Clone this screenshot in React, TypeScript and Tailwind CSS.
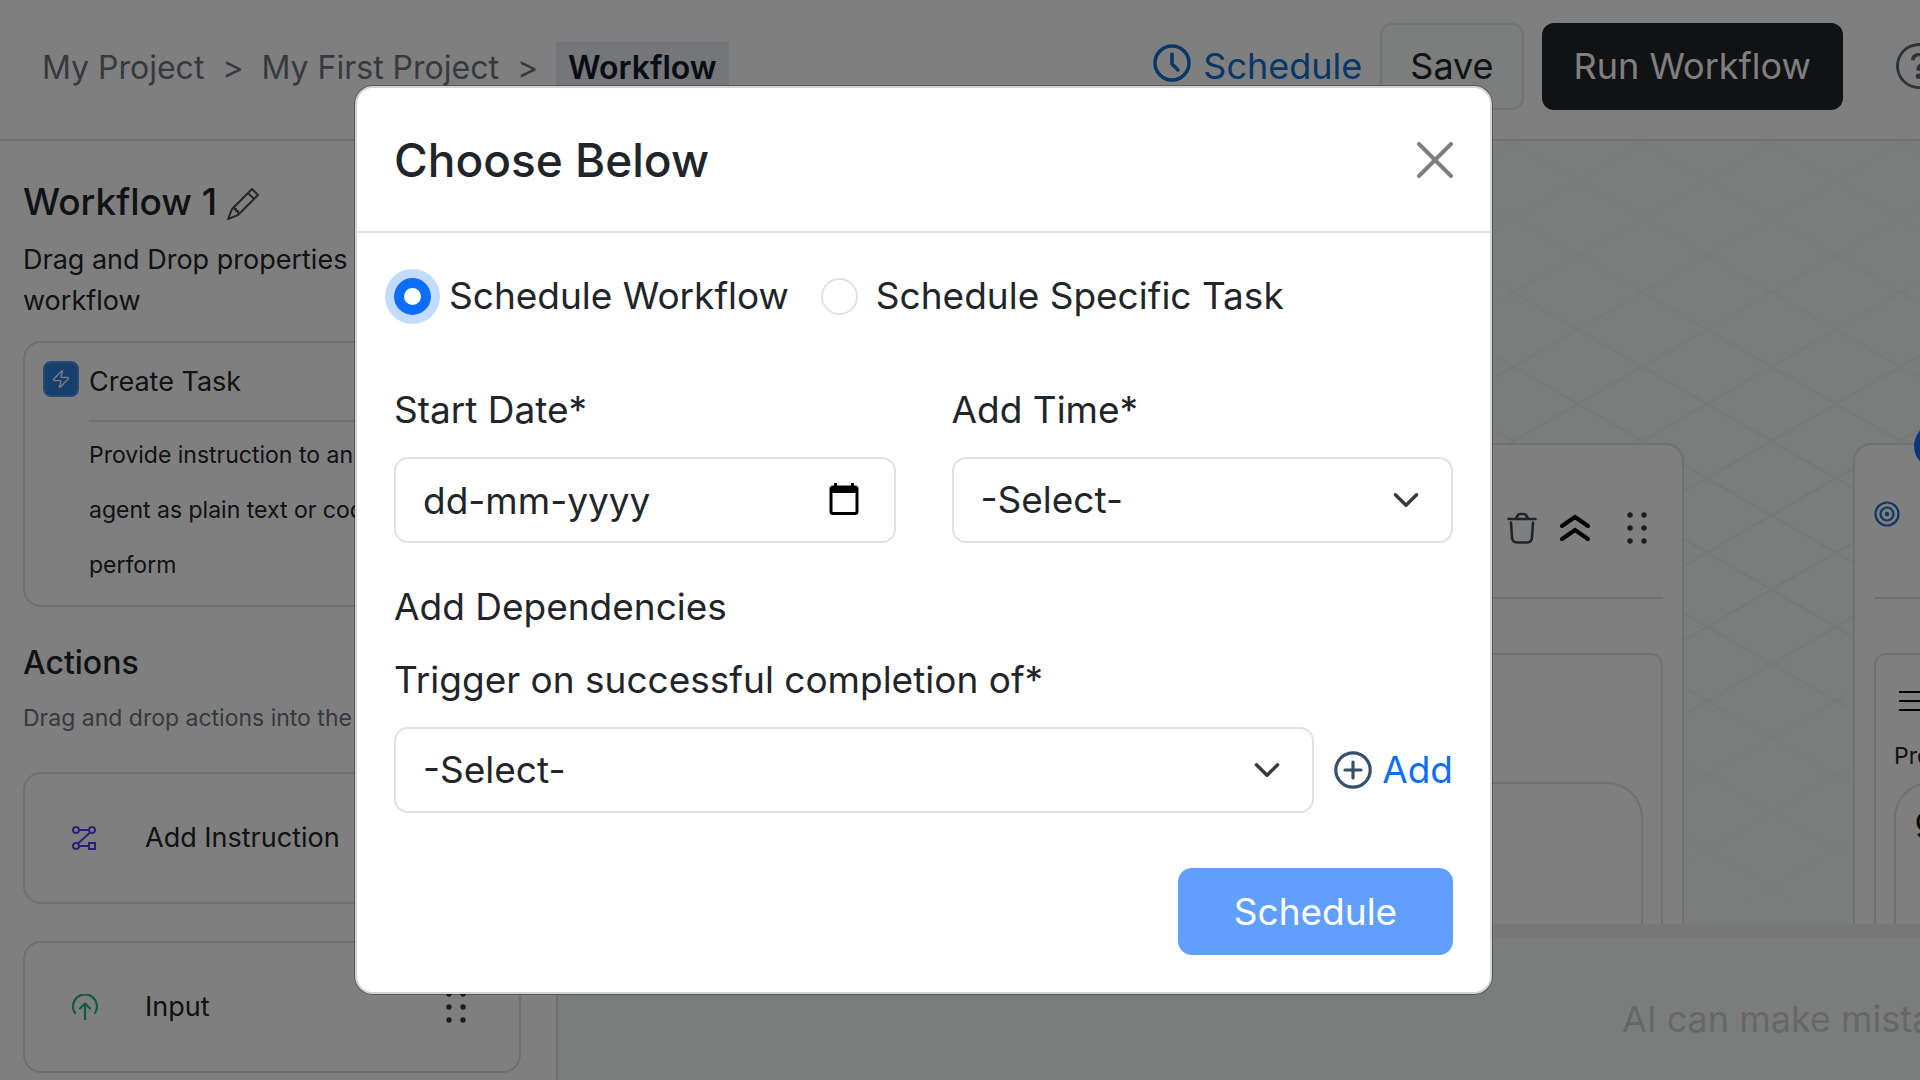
import { Zap } from "lucide-react";
import { BsPencil, BsQuestionCircle } from "react-icons/bs";
import { ReactNode, useState } from "react";

type ScheduleMode = "workflow" | "task";

const actions = [
  { name: "Add Instruction", icon: <InstructionIcon /> },
  { name: "Input", icon: <InputIcon /> },
];

function ClockIcon() {
  return (
    <svg viewBox="0 0 38 38" className="mb-1.5 size-[38px]" fill="none" stroke="currentColor" strokeWidth="3.600" strokeLinecap="round" strokeLinejoin="round">
      <circle cx="19" cy="19" r="17" />
      <path d="M19 10v10l6 6" />
    </svg>
  );
}

function InstructionIcon() {
  return (
    <svg viewBox="0 0 24 24" className="size-6 text-[#4f46e5]" fill="none" stroke="currentColor" strokeWidth="2">
      <circle cx="4" cy="4" r="3" />
      <circle cx="20" cy="4" r="3" />
      <circle cx="4" cy="20" r="3" />
      <rect x="17" y="17" width="6" height="6" />
      <path d="M7 4h10M18 6.500L6 17.500M7 20h10" />
    </svg>
  );
}

function InputIcon() {
  return (
    <svg viewBox="0 0 26 26" className="size-[26px] text-[#22b58a]" fill="none" stroke="currentColor" strokeWidth="2.200" strokeLinecap="round" strokeLinejoin="round">
      <path d="M3 19A12 12 0 1 1 23 19" />
      <path d="M13 26V10M8 14.500l5-5 5 5" />
    </svg>
  );
}

function DragDots() {
  return (
    <svg viewBox="0 0 20 32" className="h-8 w-5 text-[#343a40]" fill="currentColor">
      {[3, 16, 29].map((y) => (
        <g key={y}>
          <circle cx="3" cy={y} r="2.700" />
          <circle cx="17" cy={y} r="2.700" />
        </g>
      ))}
    </svg>
  );
}

function TrashIcon() {
  return (
    <svg viewBox="0 0 30 32" className="h-8 w-[30px] text-[#3a4856]" fill="none" stroke="currentColor" strokeWidth="2.600" strokeLinecap="round" strokeLinejoin="round">
      <path d="M1.500 7h27M9 6.500l2-3.500q.6-1 2-1h4q1.400 0 2 1l2 3.500" />
      <path d="M4 10.500l1 15q.4 5 5 5h10q4.600 0 5-5l1-15" />
    </svg>
  );
}

function CollapseIcon() {
  return (
    <svg viewBox="0 0 32 28" className="h-7 w-8 text-black" fill="none" stroke="currentColor" strokeWidth="4" strokeLinecap="round">
      <path d="M3 12L16 3l13 9M3 25l13-9 13 9" />
    </svg>
  );
}

function TargetIcon() {
  return (
    <svg viewBox="0 0 26 26" className="size-[26px] text-[#1c6fc9]" fill="none" stroke="currentColor" strokeWidth="2.200">
      <circle cx="13" cy="13" r="11.500" />
      <circle cx="13" cy="13" r="6.500" />
      <circle cx="13" cy="13" r="2.200" fill="currentColor" stroke="none" />
    </svg>
  );
}

function CalendarIcon() {
  return (
    <svg viewBox="0 0 30 32" className="h-8 w-[30px]">
      <rect x="2" y="4" width="26" height="26.500" rx="2" fill="none" stroke="#000" strokeWidth="3" />
      <path d="M2 3h26v7H2zM5 0h3v4H5zM22 0h3v4h-3z" fill="#000" />
    </svg>
  );
}

function PlusCircleIcon() {
  return (
    <svg viewBox="0 0 38 38" className="size-[38px] text-[#34506b]" fill="none" stroke="currentColor" strokeWidth="3.200" strokeLinecap="round">
      <circle cx="19" cy="19" r="17.200" />
      <path d="M19 11v16M11 19h16" />
    </svg>
  );
}

// Isometric lines behind the nodes, fading out at both ends
function CanvasGrid() {
  return (
    <svg className="absolute inset-0 size-full" aria-hidden="true">
      <defs>
        <pattern id="iso" x="117" y="40" width="129" height="74.300" patternUnits="userSpaceOnUse">
          <path d="M0 0L129 74.300M129 0L0 74.300" stroke="#ebedf7" strokeWidth="2" />
        </pattern>
        <linearGradient id="fade" x1="0" y1="0" x2="0" y2="1">
          <stop offset="0" stopColor="#fff" stopOpacity="0.3" />
          <stop offset="0.4" stopColor="#fff" />
          <stop offset="0.6" stopColor="#fff" />
          <stop offset="1" stopColor="#fff" stopOpacity="0" />
        </linearGradient>
        <mask id="gridMask">
          <rect width="100%" height="100%" fill="url(#fade)" />
        </mask>
      </defs>
      <rect width="100%" height="100%" fill="url(#iso)" mask="url(#gridMask)" />
    </svg>
  );
}

function Header() {
  return (
    <header className="flex h-[141px] shrink-0 items-center justify-between border-b-2 border-[#dee2e6] bg-white pb-[7px] pl-[42px]">
      <nav className="flex items-center gap-[18px] pt-[3px] text-[32px] leading-[52px] text-[#6c757d]">
        <a href="#projects">My Project</a>
        <span>&gt;</span>
        <a href="#first-project">My First Project</a>
        <span>&gt;</span>
        <a href="#workflow" className="bg-[#e9edf2] px-3 font-semibold text-[#111827]">Workflow</a>
      </nav>
      <div className="-mr-[22px] flex shrink-0 items-center text-[36px] leading-[54px]">
        <button className="mr-[18px] flex items-center gap-3 text-[#0d6fd1]">
          <ClockIcon />
          Schedule
        </button>
        <button className="mr-[18px] h-[87px] rounded-xl border-2 border-[#e3e8e7] bg-[#f8fbfa] px-7 text-[#212529]">Save</button>
        <button className="mr-[53px] h-[87px] rounded-xl bg-[#212529] px-8 text-white">Run Workflow</button>
        <button aria-label="Help">
          <BsQuestionCircle className="size-[46px] text-[#5c6670]" />
        </button>
      </div>
    </header>
  );
}

function Sidebar() {
  return (
    <aside className="w-[558px] shrink-0 border-r-2 border-[#dee2e6] bg-white px-[23px] pt-[34px] text-[#212529]">
      <h1 className="flex items-center gap-2.5 text-[37px] leading-[54px] font-medium">
        Workflow 1
        <BsPencil className="mt-1 size-8 text-[#495057]" />
      </h1>
      <p className="mt-2.5 text-[27px] leading-[41px]">Drag and Drop properties into your workflow</p>

      <div className="mt-5 mr-3 flex h-[266px] gap-2.5 rounded-[18px] border-2 border-[#dee2e6] pt-[18px] pl-[18px]">
        <div className="flex size-9 shrink-0 items-center justify-center rounded-lg border-2 border-[#4a94ea] bg-[#2f7fdc]">
          <Zap className="size-5 text-white" strokeWidth={1.5} />
        </div>
        <div className="grow">
          <h2 className="border-b-2 border-[#dee2e6] pb-[18px] text-[27px] leading-[41px]">Create Task</h2>
          <p className="mt-1.5 w-80 text-[23px] leading-[55px]">Provide instruction to an agent as plain text or code to perform</p>
        </div>
      </div>

      <h2 className="mt-[34px] text-[32px] leading-[44px] font-medium">Actions</h2>
      <p className="mt-4 text-[23px] leading-[34px] text-[#6b7280]">Drag and drop actions into the flow</p>
      <ul className="mt-[37px] mr-3 flex flex-col gap-[37px]">
        {actions.map((action) => (
          <li key={action.name} className="flex h-[132px] items-center rounded-[18px] border-2 border-[#dee2e6] pr-[53px] pl-[47px] text-[27px]">
            <span className="flex w-[73px] shrink-0">{action.icon}</span>
            <span className="grow">{action.name}</span>
            <DragDots />
          </li>
        ))}
      </ul>
    </aside>
  );
}

function NodeCard({ className, children }: { className: string; children: ReactNode }) {
  return (
    <section className={`absolute top-[302px] h-[800px] rounded-[18px] border-2 border-[#dee2e6] bg-white px-[19px] ${className}`}>
      {children}
    </section>
  );
}

function Canvas() {
  return (
    <main className="flex min-w-0 grow flex-col bg-[#f7fbf9]">
      <div className="relative grow overflow-hidden">
        <CanvasGrid />
        <NodeCard className="left-[142px] w-[984px]">
          <div className="flex h-[154px] items-center justify-end border-b-2 border-[#dee2e6] pt-[14px] pr-4">
            <button aria-label="Delete" className="mr-[22px]"><TrashIcon /></button>
            <button aria-label="Collapse" className="mr-[36px]"><CollapseIcon /></button>
            <DragDots />
          </div>
          <div className="mt-[54px] h-[600px] rounded-xl border-2 border-[#dee2e6] px-[18px] pt-[127px]">
            <div className="h-[400px] rounded-[36px] border-2 border-[#dee2e6]" />
          </div>
        </NodeCard>
        <NodeCard className="left-[1295px] w-[984px]">
          <div className="absolute -top-[22px] left-[59px] size-[46px] rounded-full bg-[#0d6efd]" />
          <div className="flex h-[154px] items-start border-b-2 border-[#dee2e6] pt-14">
            <TargetIcon />
          </div>
          <div className="mt-[54px] h-[600px] rounded-xl border-2 border-[#dee2e6] px-[18px] pt-9">
            <svg viewBox="0 0 32 20" className="ml-1 h-5 w-8" stroke="#000" strokeWidth="2">
              <path d="M1 1h30M1 10h30M1 19h30" />
            </svg>
            <p className="mt-7 text-[23px] leading-[34px] text-[#212529]">Provide instruction</p>
            <div className="mt-[9px] h-[400px] rounded-[36px] border-2 border-[#dee2e6] px-[19px] pt-3 text-[32px] leading-[48px] text-black">generate</div>
          </div>
        </NodeCard>
      </div>
      <div className="h-3.5 shrink-0 bg-[#f0f0f0]" />
      <footer className="h-[142px] shrink-0 overflow-hidden pt-[54px] pl-[1064px] text-[36px] leading-[54px] whitespace-nowrap text-[#cfcfcf]">
        AI can make mistakes
      </footer>
    </main>
  );
}

function SelectBox({ id }: { id: string }) {
  return (
    <div className="relative">
      <select id={id} className="h-[86px] w-full appearance-none rounded-[14px] border-2 border-[#dee2e6] bg-white px-[27px]">
        <option>-Select-</option>
      </select>
      <svg viewBox="0 0 16 16" className="pointer-events-none absolute top-[26px] right-[30px] size-[34px]" fill="none" stroke="#343a40" strokeWidth="1.600" strokeLinecap="round" strokeLinejoin="round">
        <path d="M3 5.500l5 5 5-5" />
      </svg>
    </div>
  );
}

function ScheduleDialog() {
  const [mode, setMode] = useState<ScheduleMode>("workflow");

  const radioClass =
    "size-[37px] shrink-0 appearance-none rounded-full border-2 border-[#dee2e6] checked:border-[10px] checked:border-[#0d6efd] checked:ring-[9px] checked:ring-[#c2dbfe]";

  return (
    <div role="dialog" aria-labelledby="dialog-title" className="w-[1137px] rounded-[18px] border-2 border-[#d4d4d4] bg-white text-[37px] leading-[54px] text-[#212529] ring-1 ring-black/30">
      <div className="flex h-[145px] items-center justify-between border-b-2 border-[#dee2e6] px-[37px]">
        <h2 id="dialog-title" className="text-[46px] leading-[68px] font-medium">Choose Below</h2>
        <button aria-label="Close">
          <svg viewBox="0 0 36 36" className="size-9" stroke="#7f7f7f" strokeWidth="4" strokeLinecap="round">
            <path d="M2 2l32 32M34 2L2 34" />
          </svg>
        </button>
      </div>

      <form className="px-[37px] pt-9 pb-[37px]" onSubmit={(e) => e.preventDefault()}>
        <div className="flex gap-8">
          <label className="flex items-center gap-[18px]">
            <input type="radio" name="mode" checked={mode === "workflow"} onChange={() => setMode("workflow")} className={radioClass} />
            Schedule Workflow
          </label>
          <label className="flex items-center gap-[18px]">
            <input type="radio" name="mode" checked={mode === "task"} onChange={() => setMode("task")} className={radioClass} />
            Schedule Specific Task
          </label>
        </div>

        <div className="mt-[60px] grid grid-cols-2 gap-14">
          <div>
            <label htmlFor="start-date" className="mb-5 block">Start Date*</label>
            <div className="relative">
              <input id="start-date" type="text" placeholder="dd-mm-yyyy" className="h-[86px] w-full rounded-[14px] border-2 border-[#dee2e6] px-[27px] placeholder:text-[#212529]" />
              <div className="pointer-events-none absolute top-[26px] right-[37px]">
                <CalendarIcon />
              </div>
            </div>
          </div>
          <div>
            <label htmlFor="add-time" className="mb-5 block">Add Time*</label>
            <SelectBox id="add-time" />
          </div>
        </div>

        <h3 className="mt-[37px]">Add Dependencies</h3>
        <label htmlFor="dependency" className="mt-[19px] mb-5 block">Trigger on successful completion of*</label>
        <div className="flex items-center gap-5">
          <div className="grow">
            <SelectBox id="dependency" />
          </div>
          <button type="button" className="flex items-center gap-2.5 text-[#0d6efd]">
            <PlusCircleIcon />
            Add
          </button>
        </div>

        <div className="mt-[55px] flex justify-end">
          <button type="submit" className="h-[87px] w-[275px] rounded-[14px] bg-[#619fff] text-white">Schedule</button>
        </div>
      </form>
    </div>
  );
}

export default function App() {
  return (
    <div className="relative flex h-screen flex-col overflow-hidden font-['Inter',sans-serif]">
      <Header />
      <div className="flex min-h-0 grow">
        <Sidebar />
        <Canvas />
      </div>
      <div className="absolute inset-0 flex items-start justify-center bg-black/50 pt-[86px] pr-[73px]">
        <ScheduleDialog />
      </div>
    </div>
  );
}
